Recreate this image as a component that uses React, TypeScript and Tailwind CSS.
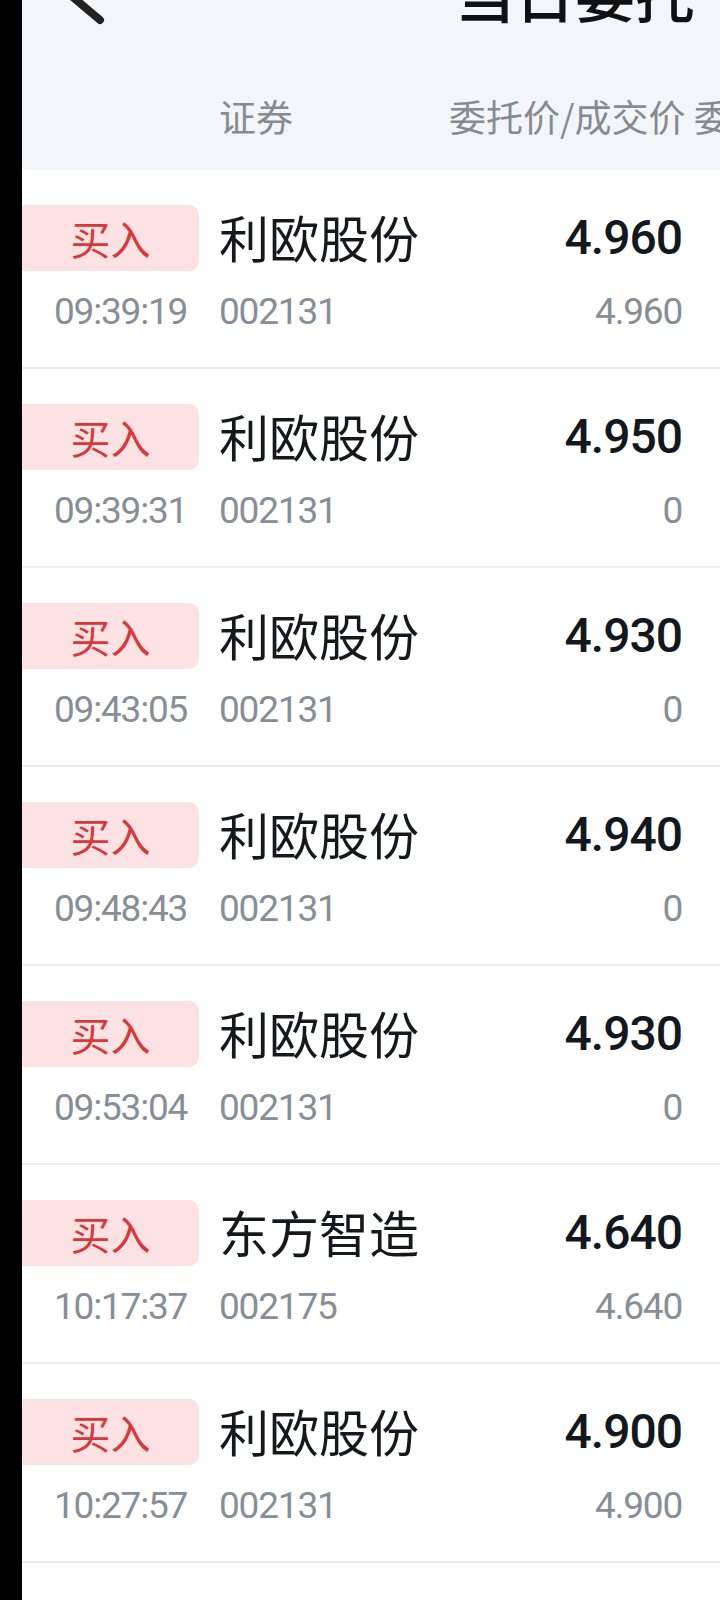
const orders = [
  { time: "09:39:19", name: "利欧股份", code: "002131", price: "4.960", deal: "4.960" },
  { time: "09:39:31", name: "利欧股份", code: "002131", price: "4.950", deal: "0" },
  { time: "09:43:05", name: "利欧股份", code: "002131", price: "4.930", deal: "0" },
  { time: "09:48:43", name: "利欧股份", code: "002131", price: "4.940", deal: "0" },
  { time: "09:53:04", name: "利欧股份", code: "002131", price: "4.930", deal: "0" },
  { time: "10:17:37", name: "东方智造", code: "002175", price: "4.640", deal: "4.640" },
  { time: "10:27:57", name: "利欧股份", code: "002131", price: "4.900", deal: "4.900" },
];

const cjk = "font-['Noto_Sans_CJK_SC','Noto_Sans',sans-serif]";
const num = "font-['Roboto','Noto_Sans_CJK_SC',sans-serif]";

export default function App() {
  return (
    <div className="flex w-[720px] min-h-[1600px] overflow-hidden bg-white">
      {/* black strip on the left edge */}
      <div className="w-[22px] shrink-0 bg-black" />

      <div className="flex-1 min-w-0 flex flex-col">
        {/* header, partly scrolled off */}
        <div className="h-[170px] bg-[#f3f6f9] flex flex-col">
          <div className="flex items-start h-[60px] -mt-[38px]">
            <svg width="60" height="70" viewBox="0 0 60 70" className="ml-[28px] shrink-0 overflow-visible">
              <polyline points="50,58 12,26 50,-6" fill="none" stroke="#222" strokeWidth="8" strokeLinecap="round" strokeLinejoin="round" />
            </svg>
            <h1 className={`${cjk} ml-[345px] text-[60px] leading-[60px] font-medium text-[#111] whitespace-nowrap`}>当日委托</h1>
          </div>
          <div className={`${cjk} flex items-center h-[60px] mt-[65px] text-[37px] text-[#868b92] whitespace-nowrap`}>
            <span className="ml-[197px]">证券</span>
            <span className="ml-[156px]">委托价/成交价 委托数量</span>
          </div>
        </div>

        {/* order rows */}
        {orders.map((o, i) => (
          <div key={i} className="h-[199px] border-b-2 border-[#ececec] flex flex-col">
            <div className="flex items-center h-[66px] mt-[35px] pr-[38px]">
              <div className={`${cjk} w-[177px] h-[66px] shrink-0 rounded-r-[10px] bg-[#fde2e4] text-[#d8383a] text-[40px] flex items-center justify-center`}>
                买入
              </div>
              <span className={`${cjk} ml-[20px] mb-[3px] text-[50px] text-[#15191e] whitespace-nowrap`}>{o.name}</span>
              <span className={`${num} ml-auto text-[48px] font-medium tracking-[-1px] text-[#131820]`}>{o.price}</span>
            </div>
            <div className={`${num} flex items-center h-[50px] mt-[16px] pr-[38px] text-[37px] text-[#888e96] tracking-[-1.2px]`}>
              <span className="w-[177px] pl-[32px] shrink-0">{o.time}</span>
              <span className="ml-[20px]">{o.code}</span>
              <span className="ml-auto">{o.deal}</span>
            </div>
          </div>
        ))}
      </div>
    </div>
  );
}
